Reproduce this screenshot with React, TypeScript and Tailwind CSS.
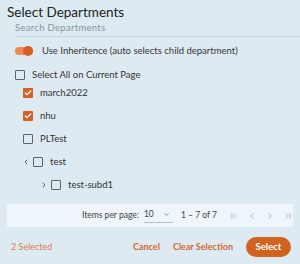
import { ChevronDown, ChevronFirst, ChevronLast, ChevronLeft, ChevronRight, Check } from "lucide-react";

const ROWS = [
  { label: "march2022", checked: true, depth: 0, caret: null },
  { label: "nhu", checked: true, depth: 0, caret: null },
  { label: "PLTest", checked: false, depth: 0, caret: null },
  { label: "test", checked: false, depth: 1, caret: "open" },
  { label: "test-subd1", checked: false, depth: 2, caret: "closed" },
] as const;

function Box({ checked }: { checked: boolean }) {
  if (checked) {
    return (
      <span className="flex size-[10px] shrink-0 items-center justify-center rounded-[1px] bg-[#d65f26]">
        <Check className="size-[8px] text-white" strokeWidth={4} />
      </span>
    );
  }
  return <span className="size-[10px] shrink-0 rounded-[1px] border border-[#5f6368]" />;
}

export default function App() {
  return (
    <div className="h-[264px] w-[300px] overflow-hidden bg-[#deeaf1] font-['Lato','Noto_Sans',sans-serif] text-[#333]">
      <h1 className="h-[22px] pl-[7px] pt-[1px] text-[13.5px] leading-[22px] text-[#222]">Select Departments</h1>

      <div className="ml-[15px] border-b border-[#c9d5dc] pb-[2px] text-[9.5px] leading-[12px] tracking-[0.3px] text-[#8a9299]">
        Search Departments
      </div>

      <div className="ml-[15px] mt-[9px] flex h-[10px] items-center gap-[9px]">
        <span className="relative h-[8px] w-[18px] rounded-full bg-[#e88a52]">
          <span className="absolute right-0 top-[-1px] size-[10px] rounded-full bg-[#d65f26]" />
        </span>
        <span className="text-[9.5px] leading-[12px]">Use Inheritence (auto selects child department)</span>
      </div>

      <div className="ml-[15px] mt-[14px] flex h-[10px] items-center gap-[7px]">
        <Box checked={false} />
        <span className="text-[9.5px] leading-[12px]">Select All on Current Page</span>
      </div>

      <div className="mt-[1px] flex flex-col">
        {ROWS.map((row) => (
          <div
            key={row.label}
            className={
              "flex h-[23px] items-center " +
              (row.depth === 0 ? "pl-[23px]" : row.depth === 1 ? "pl-[22px]" : "pl-[40px]")
            }
          >
            {row.caret === "open" && <ChevronLeft className="mr-[3px] size-[8px] text-[#444]" strokeWidth={2.5} />}
            {row.caret === "closed" && <ChevronRight className="mr-[3px] size-[8px] text-[#444]" strokeWidth={2.5} />}
            <Box checked={row.checked} />
            <span className="ml-[7px] text-[9.5px] leading-[12px]">{row.label}</span>
          </div>
        ))}
      </div>

      <div className="mx-[7px] mt-[8px] flex h-[23px] items-center bg-[#eef5fb] pl-[75px] text-[8.5px] text-[#444]">
        <span>Items per page:</span>
        <span className="ml-[5px] flex w-[29px] items-center justify-between border-b border-[#b8c0c6] pb-[1px]">
          <span>10</span>
          <ChevronDown className="mr-[3px] size-[7px] text-[#666]" strokeWidth={2.5} />
        </span>
        <span className="ml-[8px]">1 – 7 of 7</span>
        <div className="ml-auto flex items-center gap-[8px] text-[#a7adb2]">
          <ChevronFirst className="size-[10px]" strokeWidth={2} />
          <ChevronLeft className="size-[10px]" strokeWidth={2} />
          <ChevronRight className="size-[10px]" strokeWidth={2} />
          <ChevronLast className="size-[10px]" strokeWidth={2} />
        </div>
      </div>

      <div className="mt-[10px] flex h-[20px] items-center pl-[11px] pr-[9px] text-[9px]">
        <span className="text-[#d9804f]">2 Selected</span>
        <span className="ml-auto font-bold text-[#cf6a35]">Cancel</span>
        <span className="ml-[13px] font-bold text-[#cf6a35]">Clear Selection</span>
        <button className="ml-[13px] h-[20px] w-[45px] rounded-full bg-[#d2621f] text-[9.5px] font-bold text-white">
          Select
        </button>
      </div>
    </div>
  );
}
